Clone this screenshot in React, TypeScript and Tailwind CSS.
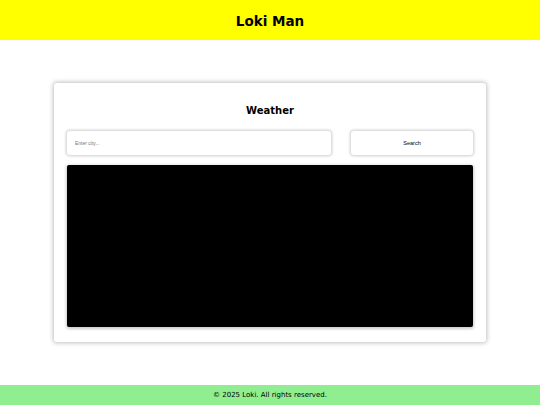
import React from "react";

export default function App() {
  return (
    <div className="flex flex-col min-h-[405px] w-full bg-white" style={{ fontFamily: '"DejaVu Sans", sans-serif' }}>
      <header className="h-10 bg-[#ffff00] flex items-center justify-center pt-[2px]">
        <h1 className="text-[13.5px] font-bold text-black">Loki Man</h1>
      </header>
      <main className="flex-1 flex items-center justify-center">
        <div className="w-[432px] h-[259px] bg-white rounded-[3px] shadow-[0_0_4px_1px_rgba(0,0,0,0.25)] px-[13px] pt-[21px] pb-[15px] flex flex-col">
          <h2 className="text-[10px] font-bold text-center h-[14px] leading-[14px] mb-[13px] text-black">Weather</h2>
          <div className="flex gap-[20px] h-6">
            <input
              className="w-[264px] h-6 rounded-[3px] bg-white shadow-[0_0_3px_1px_rgba(0,0,0,0.2)] px-[8px] text-[5px] outline-none placeholder:text-[#777]"
              style={{ fontFamily: '"Liberation Sans", Arial, sans-serif' }}
              placeholder="Enter city..."
            />
            <button
              className="w-[122px] h-6 rounded-[3px] bg-white shadow-[0_0_3px_1px_rgba(0,0,0,0.2)] text-[5.5px] text-black"
              style={{ fontFamily: '"Liberation Sans", Arial, sans-serif' }}
            >
              Search
            </button>
          </div>
          <div className="mt-[10px] flex-1 bg-black rounded-[2px] shadow-[0_1px_3px_1px_rgba(0,0,0,0.2)]" />
        </div>
      </main>
      <footer className="h-5 bg-[#90ee90] flex items-center justify-center">
        <p className="text-[7px] text-black">© 2025 Loki. All rights reserved.</p>
      </footer>
    </div>
  );
}
